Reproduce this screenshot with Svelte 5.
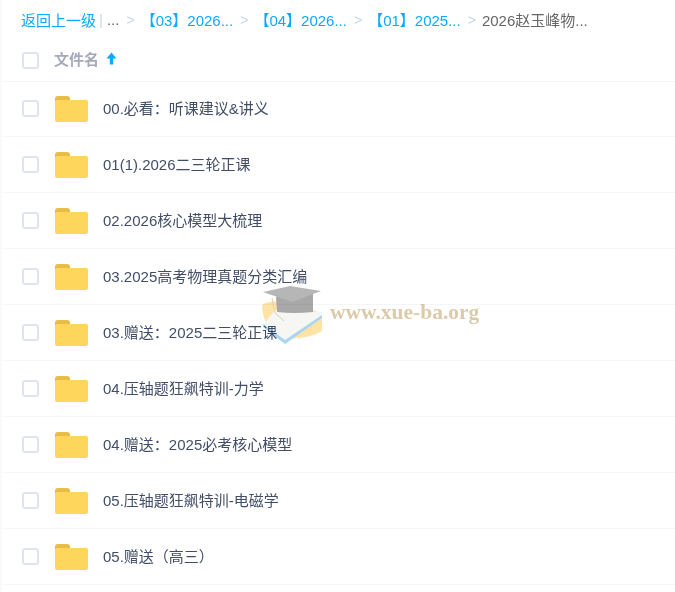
<script lang="ts">
  // Netdisk style file list with breadcrumb header.
  const crumbs = ["【03】2026...", "【04】2026...", "【01】2025..."];
  const files = [
    "00.必看：听课建议&讲义",
    "01(1).2026二三轮正课",
    "02.2026核心模型大梳理",
    "03.2025高考物理真题分类汇编",
    "03.赠送：2025二三轮正课",
    "04.压轴题狂飙特训-力学",
    "04.赠送：2025必考核心模型",
    "05.压轴题狂飙特训-电磁学",
    "05.赠送（高三）",
  ];
</script>

<div class="page">
  <nav class="crumbs">
    <a class="back" href="#top">返回上一级</a>
    <span class="pipe">|</span>
    <span class="dots">...</span>
    {#each crumbs as crumb}
      <span class="sep">&gt;</span>
      <a class="crumb" href="#top">{crumb}</a>
    {/each}
    <span class="sep">&gt;</span>
    <span class="current">2026赵玉峰物...</span>
  </nav>

  <div class="head">
    <span class="check"></span>
    <span class="head-name">文件名</span>
    <svg class="arrow" width="11" height="13" viewBox="0 0 11 13">
      <path d="M5.5 0.5 L10.5 6.5 H7.2 V12.5 H3.8 V6.5 H0.5 Z" fill="#09aaff" />
    </svg>
  </div>

  <ul class="list">
    {#each files as name}
      <li class="row">
        <span class="check"></span>
        <svg class="folder" width="33" height="27" viewBox="0 0 33 27">
          <path d="M0 3 Q0 0 3 0 H12 Q15 0 15 3 V6 H0 Z" fill="#e9bb49" />
          <path d="M0 6 Q0 4 2 4 H31 Q33 4 33 6 V24 Q33 26 31 26 H2 Q0 26 0 24 Z" fill="#ffd65c" />
        </svg>
        <span class="name">{name}</span>
      </li>
    {/each}
  </ul>

  <div class="mark">
    <svg width="66" height="62" viewBox="0 0 66 62">
      <path d="M2 20 Q8 14 30 18 L62 28 V46 Q50 53 36 53 L24 56 Q2 42 2 20 Z" fill="#ffe3a6" />
      <path d="M15 25 L62 27 V32 L25 58 L3 40 Z" fill="#f6f7f5" />
      <path d="M3 39 L25 55 L62 30 V33 L25 59 L3 42 Z" fill="#a9d5ef" />
      <path d="M16 12 L53 9 V27 Q34 29 17 27 Z" fill="#a8a8a8" />
      <path d="M3 7 L30 1 L61 6 L32 17 Z" fill="#b6b6b6" />
      <path d="M12 13 L15 28 L24 36" stroke="#dccfae" stroke-width="1" fill="none" />
    </svg>
    <span class="mark-text">www.xue-ba.org</span>
  </div>
</div>

<style>
  :global(body) {
    background: #fff;
  }

  .page {
    position: relative;
    height: 592px;
    overflow: hidden;
    font-family: "Liberation Sans", "Noto Sans CJK SC", sans-serif;
    font-size: 15px;
    color: #424e67;
    box-sizing: border-box;
    padding-left: 2px;
    box-shadow: inset 2px 0 0 #fafafa;
  }

  .crumbs {
    display: flex;
    align-items: center;
    height: 39px;
    padding-bottom: 1px;
    padding-left: 19px;
    white-space: nowrap;
  }

  .back,
  .crumb {
    color: #09aaff;
    text-decoration: none;
  }

  .pipe {
    color: #c9d8ea;
    margin-left: 3px;
  }

  .dots {
    color: #666;
    margin-left: 4px;
  }

  .sep {
    color: #c5d6ec;
    margin: 0 6px 0 7px;
    font-size: 14px;
  }

  .current {
    color: #666;
  }

  .head {
    display: flex;
    align-items: center;
    height: 40px;
    padding: 0 0 1px 20px;
    border-bottom: 1px solid #f4f6f9;
  }

  .head-name {
    margin-left: 15px;
    color: #a5a9b8;
    font-weight: bold;
    position: relative;
    top: -2px;
  }

  .arrow {
    margin-left: 7px;
    position: relative;
    top: -2px;
  }

  .check {
    display: block;
    flex: none;
    width: 13px;
    height: 13px;
    border: 2px solid #dfe5ee;
    border-radius: 3px;
    background: #fff;
  }

  /* first row starts on the header rule, so its line lands 55px below it */
  .list {
    list-style: none;
    margin: -1px 0 0;
    padding: 0;
  }

  .row {
    display: flex;
    align-items: center;
    height: 55px;
    padding-left: 20px;
    border-bottom: 1px solid #f4f6f9;
  }

  .folder {
    flex: none;
    margin-left: 16px;
    position: relative;
    top: 1px;
  }

  .name {
    margin-left: 15px;
    position: relative;
    top: -1px;
  }

  /* watermark sits on the screenshot, list text shows through it */
  .mark {
    position: absolute;
    left: 260px;
    top: 285px;
    display: flex;
    align-items: center;
    pointer-events: none;
    mix-blend-mode: multiply;
  }

  .mark-text {
    margin-left: 4px;
    margin-top: -7px;
    font-family: "Liberation Serif", serif;
    font-weight: bold;
    font-size: 21.5px;
    color: #dccbaa;
  }
</style>
